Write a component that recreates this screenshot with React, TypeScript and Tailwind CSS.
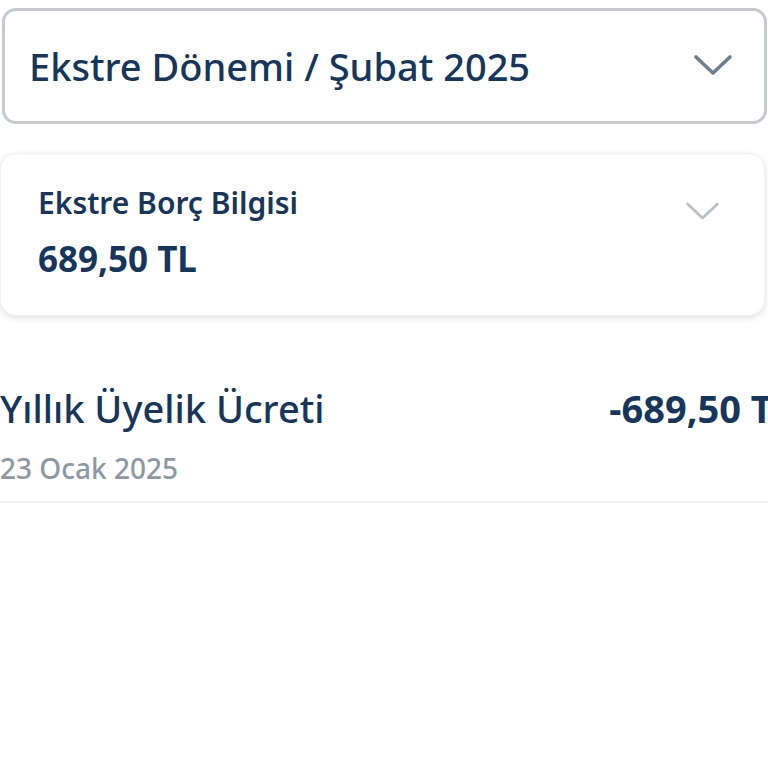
function Chevron({ className, stroke }: { className: string; stroke: number }) {
  return (
    <svg viewBox="0 0 40 22" fill="none" className={className}>
      <path d="M3 3 L20 19 L37 3" stroke="currentColor" strokeWidth={stroke} strokeLinecap="round" strokeLinejoin="round" />
    </svg>
  );
}

export default function App() {
  return (
    <div className="w-[768px] h-[768px] overflow-hidden bg-white font-['Noto_Sans',sans-serif] text-[#16365b]">
      {/* Period select */}
      <div className="pt-2 pl-0.5 pr-px">
        <div className="h-[116px] flex items-center justify-between rounded-[14px] border-[3px] border-[#c6c9cd] pl-[24px] pr-[31px]">
          <span className="text-[38px] font-medium">Ekstre Dönemi / Şubat 2025</span>
          <Chevron className="w-[40px] h-[22px] text-[#6f7d8c] mt-[-2px]" stroke={3.6} />
        </div>
      </div>

      {/* Debt card */}
      <div className="mt-[29px] pr-[3px]">
        <div className="h-[163px] rounded-[16px] bg-white shadow-[0_2px_6px_rgba(0,0,0,0.12)] border border-[#f0f1f2] flex justify-between pl-[37px] pr-[44px] pt-[28px]">
          <div>
            <p className="text-[30px] font-semibold leading-[42px]">Ekstre Borç Bilgisi</p>
            <p className="text-[35px] font-bold leading-[46px] mt-[12px]">689,50 TL</p>
          </div>
          <Chevron className="w-[35px] h-[20px] text-[#bcc0c5] mt-[19px]" stroke={3.2} />
        </div>
      </div>

      {/* Transaction row */}
      <div className="mt-[67px] border-b-2 border-[#eceef0] pb-[14px] w-[768px] overflow-hidden">
        <div className="flex justify-between items-start whitespace-nowrap w-[794px]">
          <span className="text-[38px] font-medium leading-[50px]">Yıllık Üyelik Ücreti</span>
          <span className="text-[38px] font-bold leading-[50px]">-689,50 TL</span>
        </div>
        <p className="text-[28px] font-medium text-[#8d98a5] mt-[16px] leading-[38px]">23 Ocak 2025</p>
      </div>
    </div>
  );
}
